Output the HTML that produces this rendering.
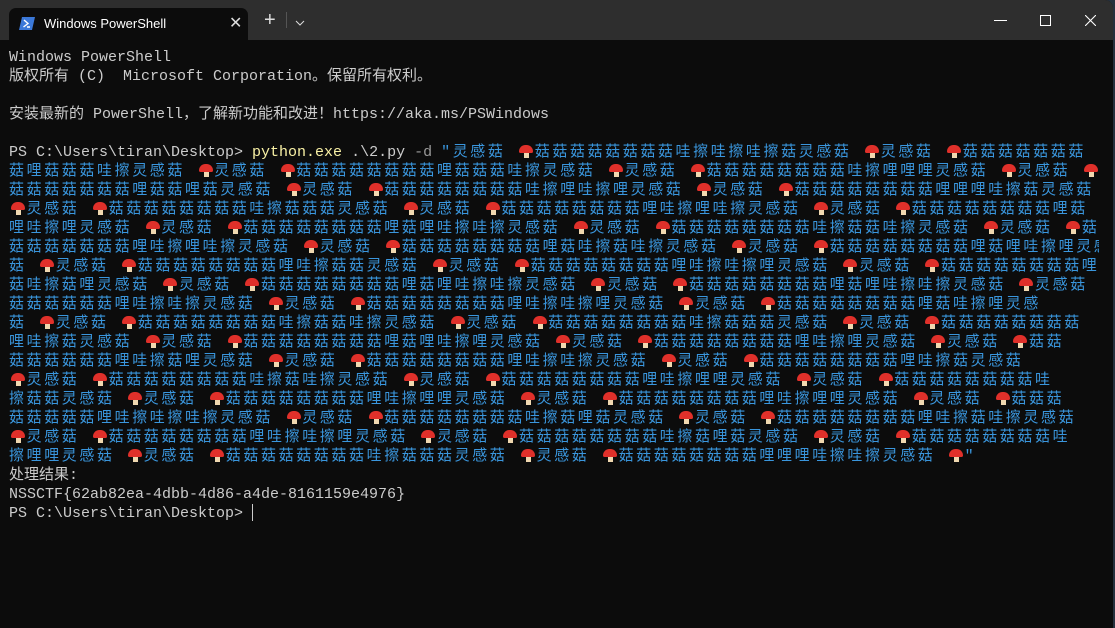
<!DOCTYPE html>
<html><head><meta charset="utf-8"><style>
body{margin:0;width:1115px;height:628px;overflow:hidden;background:#26303d;}
.win{position:absolute;left:0;top:0;width:1113px;height:628px;background:#0c0c0c;border-top-right-radius:8px;overflow:hidden;}
.bar{position:absolute;left:0;top:0;width:100%;height:40px;background:#2e2e2e;}
.tab{position:absolute;left:9px;top:8px;width:239px;height:32px;background:#0c0c0c;border-radius:7px 7px 0 0;}
.tab .t{position:absolute;left:35px;top:8px;font:13px "Liberation Sans",sans-serif;color:#fff;}
.tab .x{position:absolute;left:220px;top:5px;color:#ddd;font:16px "Liberation Sans",sans-serif;}
.term{position:absolute;left:9px;top:48px;font-family:"Liberation Mono","Noto Sans CJK SC",monospace;font-size:15px;line-height:19px;color:#cccccc;}
.l{height:19px;overflow:hidden;width:1090px;white-space:pre}
.b{color:#3a96dd;letter-spacing:2.6px}
.y{color:#f9f1a5}
.m{display:inline-block;width:17.6px;height:14px;position:relative;vertical-align:-2px;letter-spacing:0}
.m:before{content:"";position:absolute;left:2px;top:1px;width:14px;height:8px;background:#e0302a;border-radius:8px 8px 2px 2px}
.m:after{content:"";position:absolute;left:7px;top:9px;width:5px;height:5px;background:#f0d8b0}
</style></head><body>
<div class="win">
<div class="bar">
<div class="tab"><svg style="position:absolute;left:10px;top:9px" width="16" height="13"><path d="M3 0H16L13 13H0Z" fill="#3b78d8"/><path d="M5 3L9 6.5 4.5 10M8 10H11" stroke="#fff" stroke-width="1.4" fill="none"/></svg><span class="t">Windows PowerShell</span><span class="x">✕</span></div>
<div style="position:absolute;left:264px;top:9px;color:#ddd;font:20px 'Liberation Sans',sans-serif">+</div>
<div style="position:absolute;left:286px;top:12px;width:1px;height:16px;background:#555"></div>
<svg style="position:absolute;left:295px;top:20px" width="10" height="6"><path d="M1 1L5 5 9 1" stroke="#ddd" fill="none"/></svg>
<div style="position:absolute;left:994px;top:20px;width:13px;height:1px;background:#fff"></div>
<div style="position:absolute;left:1040px;top:15px;width:9px;height:9px;border:1px solid #fff"></div>
<svg style="position:absolute;left:1085px;top:15px" width="11" height="11"><path d="M0 0L11 11M11 0L0 11" stroke="#fff" stroke-width="1.1"/></svg>
</div>
<div class="term"><div class="l">Windows PowerShell</div><div class="l">版权所有 (C)  Microsoft Corporation。保留所有权利。</div><div class="l"> </div><div class="l">安装最新的 PowerShell，了解新功能和改进！https://aka.ms/PSWindows</div><div class="l"> </div><div class="l">PS C:\Users\tiran\Desktop&gt; <span class="y">python.exe</span> .\2.py <span style="color:#999">-d</span> <span class="b">"灵感菇 🍄菇菇菇菇菇菇菇菇哇擦哇擦哇擦菇灵感菇 🍄灵感菇 🍄菇菇菇菇菇菇菇</span></div><div class="l b">菇哩菇菇菇哇擦灵感菇 🍄灵感菇 🍄菇菇菇菇菇菇菇菇哩菇菇菇哇擦灵感菇 🍄灵感菇 🍄菇菇菇菇菇菇菇菇哇擦哩哩哩灵感菇 🍄灵感菇 🍄菇</div><div class="l b">菇菇菇菇菇菇菇哩菇菇哩菇灵感菇 🍄灵感菇 🍄菇菇菇菇菇菇菇菇哇擦哩哇擦哩灵感菇 🍄灵感菇 🍄菇菇菇菇菇菇菇菇哩哩哩哇擦菇灵感菇</div><div class="l b">🍄灵感菇 🍄菇菇菇菇菇菇菇菇哇擦菇菇菇灵感菇 🍄灵感菇 🍄菇菇菇菇菇菇菇菇哩哇擦哩哇擦灵感菇 🍄灵感菇 🍄菇菇菇菇菇菇菇菇哩菇</div><div class="l b">哩哇擦哩灵感菇 🍄灵感菇 🍄菇菇菇菇菇菇菇菇哩菇哩哇擦哇擦灵感菇 🍄灵感菇 🍄菇菇菇菇菇菇菇菇哇擦菇菇哇擦灵感菇 🍄灵感菇 🍄菇菇</div><div class="l b">菇菇菇菇菇菇菇哩哇擦哩哇擦灵感菇 🍄灵感菇 🍄菇菇菇菇菇菇菇菇哩菇哇擦菇哇擦灵感菇 🍄灵感菇 🍄菇菇菇菇菇菇菇菇哩菇哩哇擦哩灵感</div><div class="l b">菇 🍄灵感菇 🍄菇菇菇菇菇菇菇菇哩哇擦菇菇灵感菇 🍄灵感菇 🍄菇菇菇菇菇菇菇菇哩哇擦哇擦哩灵感菇 🍄灵感菇 🍄菇菇菇菇菇菇菇菇哩</div><div class="l b">菇哇擦菇哩灵感菇 🍄灵感菇 🍄菇菇菇菇菇菇菇菇哩菇哩哇擦哇擦灵感菇 🍄灵感菇 🍄菇菇菇菇菇菇菇菇哩菇哩哇擦哇擦灵感菇 🍄灵感菇 🍄菇</div><div class="l b">菇菇菇菇菇菇哩哇擦哇擦灵感菇 🍄灵感菇 🍄菇菇菇菇菇菇菇菇哩哇擦哇擦哩灵感菇 🍄灵感菇 🍄菇菇菇菇菇菇菇菇哩菇哇擦哩灵感</div><div class="l b">菇 🍄灵感菇 🍄菇菇菇菇菇菇菇菇哇擦菇菇哇擦灵感菇 🍄灵感菇 🍄菇菇菇菇菇菇菇菇哇擦菇菇菇灵感菇 🍄灵感菇 🍄菇菇菇菇菇菇菇菇</div><div class="l b">哩哇擦菇灵感菇 🍄灵感菇 🍄菇菇菇菇菇菇菇菇哩菇哩哇擦哩灵感菇 🍄灵感菇 🍄菇菇菇菇菇菇菇菇哩哇擦哩灵感菇 🍄灵感菇 🍄菇菇</div><div class="l b">菇菇菇菇菇菇哩哇擦菇哩灵感菇 🍄灵感菇 🍄菇菇菇菇菇菇菇菇哩哇擦哇擦灵感菇 🍄灵感菇 🍄菇菇菇菇菇菇菇菇哩哇擦菇灵感菇</div><div class="l b">🍄灵感菇 🍄菇菇菇菇菇菇菇菇哇擦菇哇擦灵感菇 🍄灵感菇 🍄菇菇菇菇菇菇菇菇哩哇擦哩哩灵感菇 🍄灵感菇 🍄菇菇菇菇菇菇菇菇哇</div><div class="l b">擦菇菇灵感菇 🍄灵感菇 🍄菇菇菇菇菇菇菇菇哩哇擦哩哩灵感菇 🍄灵感菇 🍄菇菇菇菇菇菇菇菇哩哇擦哩哩灵感菇 🍄灵感菇 🍄菇菇菇</div><div class="l b">菇菇菇菇菇哩哇擦哇擦哇擦灵感菇 🍄灵感菇 🍄菇菇菇菇菇菇菇菇哇擦菇哩菇灵感菇 🍄灵感菇 🍄菇菇菇菇菇菇菇菇哩哇擦菇哇擦灵感菇</div><div class="l b">🍄灵感菇 🍄菇菇菇菇菇菇菇菇哩哇擦哇擦哩灵感菇 🍄灵感菇 🍄菇菇菇菇菇菇菇菇哇擦菇哩菇灵感菇 🍄灵感菇 🍄菇菇菇菇菇菇菇菇哇</div><div class="l b">擦哩哩灵感菇 🍄灵感菇 🍄菇菇菇菇菇菇菇菇哇擦菇菇菇灵感菇 🍄灵感菇 🍄菇菇菇菇菇菇菇菇哩哩哩哇擦哇擦灵感菇 🍄"</div><div class="l">处理结果:</div><div class="l">NSSCTF{62ab82ea-4dbb-4d86-a4de-8161159e4976}</div><div class="l">PS C:\Users\tiran\Desktop&gt; <span style="display:inline-block;width:1px;height:17px;background:#ccc;vertical-align:-4px"></span></div></div>
</div>
<script>
document.querySelectorAll('.l').forEach(function(e){e.innerHTML=e.innerHTML.replace(/🍄/g,'<span class="m"></span>');});
</script>
</body></html>
